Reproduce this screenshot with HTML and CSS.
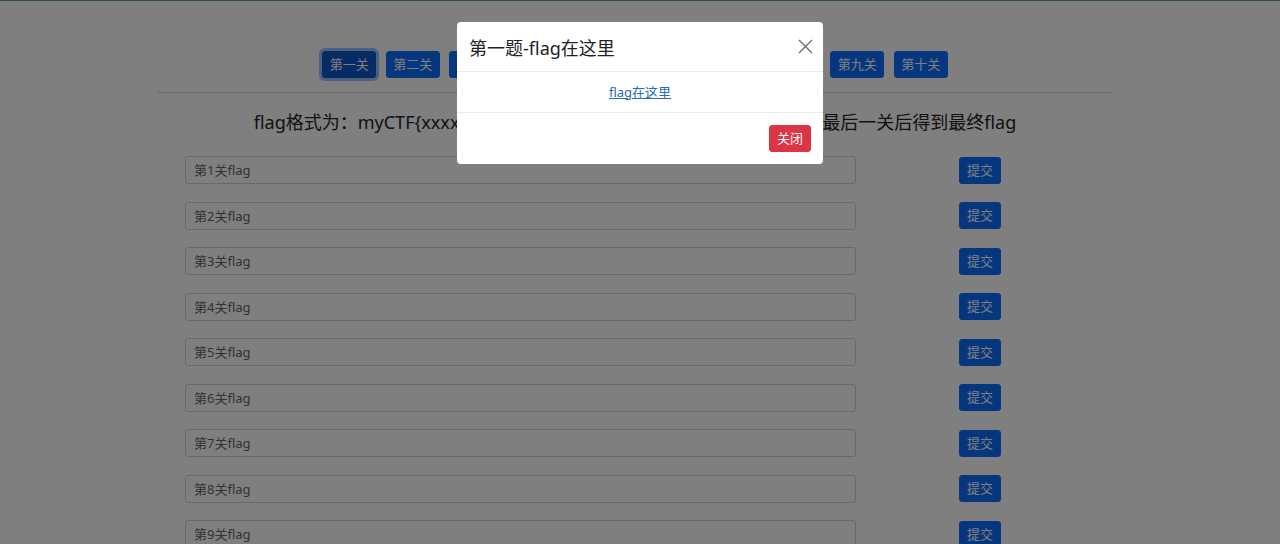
FILE: index.html
```html
<!DOCTYPE html>
<html lang="zh-CN">
<head>
  <meta charset="UTF-8">
  <title>myCTF 闯关</title>
  <link rel="stylesheet" href="styles.css">
</head>
<body class="modal-open">

  <div class="container">
    <div class="levels">
      <button class="btn level active">第一关</button>
      <button class="btn level">第二关</button>
      <button class="btn level">第三关</button>
      <button class="btn level">第四关</button>
      <button class="btn level">第五关</button>
      <button class="btn level">第六关</button>
      <button class="btn level">第七关</button>
      <button class="btn level">第八关</button>
      <button class="btn level">第九关</button>
      <button class="btn level">第十关</button>
    </div>

    <hr>

    <h4 class="tip">flag格式为：myCTF{xxxx}，共十关，每关都需要提交正确的flag，提交最后一关后得到最终flag</h4>

    <form class="flags" onsubmit="return false">
      <div class="row"><input type="text" placeholder="第1关flag"><button class="btn submit">提交</button></div>
      <div class="row"><input type="text" placeholder="第2关flag"><button class="btn submit">提交</button></div>
      <div class="row"><input type="text" placeholder="第3关flag"><button class="btn submit">提交</button></div>
      <div class="row"><input type="text" placeholder="第4关flag"><button class="btn submit">提交</button></div>
      <div class="row"><input type="text" placeholder="第5关flag"><button class="btn submit">提交</button></div>
      <div class="row"><input type="text" placeholder="第6关flag"><button class="btn submit">提交</button></div>
      <div class="row"><input type="text" placeholder="第7关flag"><button class="btn submit">提交</button></div>
      <div class="row"><input type="text" placeholder="第8关flag"><button class="btn submit">提交</button></div>
      <div class="row"><input type="text" placeholder="第9关flag"><button class="btn submit">提交</button></div>
      <div class="row"><input type="text" placeholder="第10关flag"><button class="btn submit">提交</button></div>
    </form>
  </div>

  <!-- 第一关弹窗 -->
  <div class="modal-backdrop"></div>
  <div class="modal">
    <div class="modal-dialog">
      <div class="modal-header">
        <h5 class="modal-title">第一题-flag在这里</h5>
        <button class="btn-close" aria-label="关闭">
          <svg width="15" height="15" viewBox="0 0 15 15"><path d="M1 1L14 14M14 1L1 14" stroke="#6c6c6c" stroke-width="1.4" fill="none"/></svg>
        </button>
      </div>
      <div class="modal-body">
        <a href="#">flag在这里</a>
      </div>
      <div class="modal-footer">
        <button class="btn danger">关闭</button>
      </div>
    </div>
  </div>

</body>
</html>
```

FILE: styles.css
```css
body {
  font-family: "Noto Sans", "Noto Sans CJK SC", sans-serif;
  background: #ffffff;
  color: #212529;
  margin: 0;
  border-top: 1px solid #5d9676;
}

/* bootstrap 弹窗打开时给滚动条留的位置 */
.modal-open {
  padding-right: 10px;
  overflow: hidden;
}

.container {
  width: 954px;
  margin: 0 auto;
}

.btn {
  font-family: inherit;
  font-size: 13px;
  line-height: 19px;
  color: #fff;
  background: #0d6efd;
  border: 1px solid #0d6efd;
  border-radius: 3px;
  padding: 3px 7px;
  cursor: pointer;
}

.levels {
  display: flex;
  justify-content: center;
  gap: 9.5px;
  padding-top: 50px;
}

.level {
  padding: 3px 6.5px;
}

.level.active {
  background: #0a58ca;
  border-color: #0a53be;
  box-shadow: 0 0 0 3px rgba(49, 132, 253, 0.5);
}

hr {
  border: none;
  border-top: 1px solid #c9d6cf;
  margin: 14px 0 0;
}

.tip {
  font-size: 18px;
  font-weight: normal;
  text-align: center;
  margin: 16px 0 21px;
  line-height: 26px;
}

.flags {
  padding-left: 27px;
}

.row {
  display: flex;
  align-items: center;
  margin-bottom: 17.5px;
}

.row input {
  width: 671px;
  height: 28px;
  box-sizing: border-box;
  border: 1px solid #ced4da;
  border-radius: 3px;
  padding: 0 8px;
  font-family: inherit;
  font-size: 13px;
  color: #212529;
}

.row input::placeholder {
  color: #5f666d;
}

.submit {
  margin-left: 103px;
}

.modal-backdrop {
  position: fixed;
  inset: 0;
  background: rgba(0, 0, 0, 0.5);
}

.modal {
  position: fixed;
  inset: 0;
  display: flex;
  justify-content: center;
  align-items: flex-start;
  padding-top: 22px;
}

.modal-dialog {
  width: 366px;
  background: #fff;
  border-radius: 4px;
}

.modal-header {
  display: flex;
  align-items: center;
  justify-content: space-between;
  height: 49px;
  padding: 0 6px 0 12px;
  border-bottom: 1px solid #e9ecef;
}

.modal-title {
  font-size: 18px;
  font-weight: normal;
  margin: 0;
  color: #1f2226;
}

.btn-close {
  background: none;
  border: none;
  padding: 4px;
  display: flex;
  cursor: pointer;
}

.modal-body {
  height: 40px;
  display: flex;
  align-items: center;
  justify-content: center;
  border-bottom: 1px solid #e9ecef;
  font-size: 13px;
}

.modal-body a {
  color: #2a6bb8;
  margin-top: -2px;
}

.modal-footer {
  display: flex;
  justify-content: flex-end;
  padding: 12px 12px 12px;
}

.danger {
  background: #dc3545;
  border-color: #dc3545;
}
```
